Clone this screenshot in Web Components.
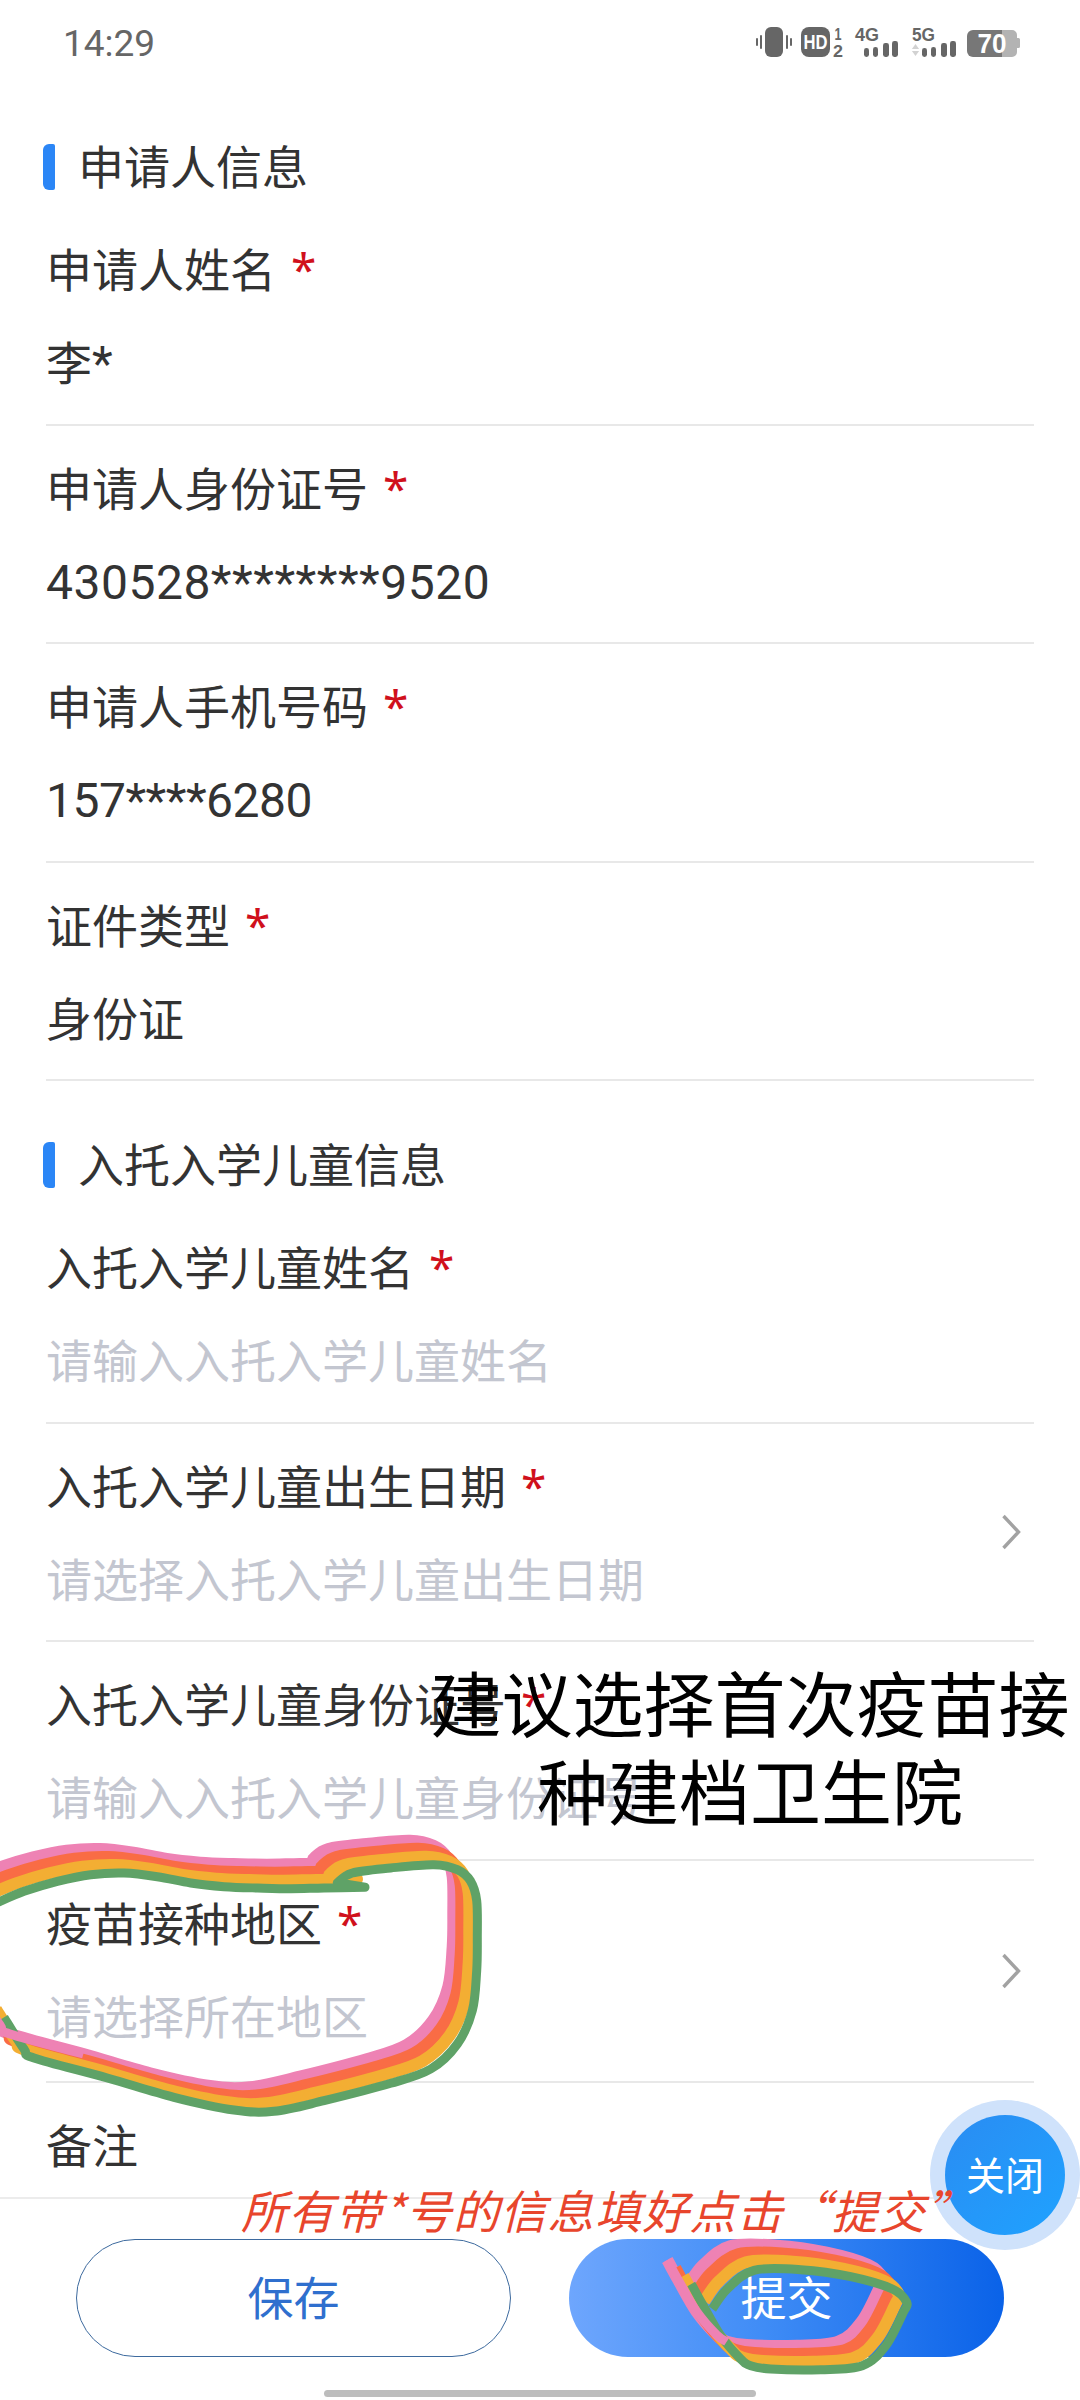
<!DOCTYPE html>
<html lang="zh-CN">
<head>
<meta charset="utf-8">
<title>入托入学预防接种查验</title>
<style>
  html, body { margin: 0; padding: 0; background: #fff; }
  body { font-family: "Noto Sans CJK SC", "Noto Sans", sans-serif; }
</style>
</head>
<body>

<phone-screen>
  <status-bar></status-bar>

  <form-section title="申请人信息">
    <form-row label="申请人姓名" value="李*" required></form-row>
    <form-row label="申请人身份证号" value="430528********9520" tracking=".5px" required></form-row>
    <form-row label="申请人手机号码" value="157****6280" tracking="-.5px" required></form-row>
    <form-row label="证件类型" value="身份证" required></form-row>
  </form-section>

  <form-section title="入托入学儿童信息">
    <form-row label="入托入学儿童姓名" placeholder="请输入入托入学儿童姓名" required></form-row>
    <form-row label="入托入学儿童出生日期" placeholder="请选择入托入学儿童出生日期" required arrow></form-row>
    <form-row label="入托入学儿童身份证号" placeholder="请输入入托入学儿童身份证号" required></form-row>
    <form-row label="疫苗接种地区" placeholder="请选择所在地区" required arrow tall></form-row>
    <form-row label="备注" last></form-row>
  </form-section>

  <action-bar slot="footer"></action-bar>

  <!-- things drawn over the form -->
  <close-fab slot="over"></close-fab>
  <rainbow-mark slot="over" origin="0,1780" top-from="250,822"
    points="-90,300 0,262 100,232 200,212 300,207 400,218 500,237 600,248 700,252 800,254 900,252 1023,250 | 940,236 | 985,207 1100,192 1230,182 1300,197 1340,232 1358,290 1360,400 1358,500 1345,620 1300,720 1220,795 1100,838 900,890 750,922 630,918 450,880 250,822 30,762 0,735 -60,640"></rainbow-mark>
  <rainbow-mark slot="over" origin="560,2080" top-from="500,785"
    points="385,615 430,555 510,499 650,497 800,518 925,555 968,595 958,625 905,725 835,785 710,797 560,795 500,785 470,765 410,695 355,600 322,540"></rainbow-mark>
  <note-text slot="over" kind="red">所有带*号的信息填好点击“提交”</note-text>
  <note-text slot="over" kind="black">建议选择首次疫苗接种建档卫生院</note-text>
</phone-screen>

<script>
// page frame, the form flows and the footer sits at the bottom
class PhoneScreen extends HTMLElement {
  constructor() {
    super();
    this.attachShadow({ mode: 'open' }).innerHTML = `
      <style>
        :host { display: flex; flex-direction: column; position: relative; width: 1080px; height: 2400px; overflow: hidden; background: #fff; }
        .form { flex: 1; min-height: 0; overflow: hidden; }
      </style>
      <div class="form"><slot></slot></div>
      <slot name="footer"></slot>
      <slot name="over"></slot>
    `;
  }
}

class StatusBar extends HTMLElement {
  constructor() {
    super();
    const bars = (dx) => [[864, 48, 5, 9], [873, 47, 5, 10], [883, 43, 6, 14], [892, 41, 6, 16]]
      .map(b => `<rect x="${b[0] + dx}" y="${b[1]}" width="${b[2]}" height="${b[3]}" rx="2.4" fill="#666"/>`).join('');
    this.attachShadow({ mode: 'open' }).innerHTML = `
      <style>
        :host { display: flex; justify-content: space-between; align-items: center; height: 83px; padding: 0 58px 0 63px; box-sizing: border-box; }
        .time { font: 400 37px Roboto, sans-serif; color: #666; margin-top: 4px; }
        svg { display: block; }
        text { font-family: "Liberation Sans", sans-serif; font-weight: 700; }
      </style>
      <span class="time">14:29</span>
      <svg width="268" height="44" viewBox="754 20 268 44">
        <rect x="765" y="27" width="18" height="30" rx="6" fill="#666"/>
        <rect x="756" y="38" width="2" height="8" rx="1" fill="#666"/>
        <rect x="760" y="35" width="2" height="14" rx="1" fill="#666"/>
        <rect x="786" y="35" width="2" height="14" rx="1" fill="#666"/>
        <rect x="790" y="38" width="2" height="8" rx="1" fill="#666"/>

        <rect x="801" y="27" width="29" height="30" rx="8" fill="#666"/>
        <text x="815.5" y="49" font-size="20" fill="#fff" text-anchor="middle" textLength="24" lengthAdjust="spacingAndGlyphs">HD</text>
        <text x="838" y="40" font-size="17" fill="#666" text-anchor="middle" textLength="7" lengthAdjust="spacingAndGlyphs">1</text>
        <text x="838" y="57" font-size="17" fill="#666" text-anchor="middle" textLength="10" lengthAdjust="spacingAndGlyphs">2</text>

        <text x="855" y="41" font-size="18" fill="#666" textLength="24" lengthAdjust="spacingAndGlyphs">4G</text>
        ${bars(0)}

        <text x="912" y="41" font-size="18" fill="#666" textLength="23" lengthAdjust="spacingAndGlyphs">5G</text>
        <path d="M915.5 44l3.6 5h-7.2z M915.5 56l3.6-5h-7.2z" fill="#d2d2d2"/>
        ${bars(58)}

        <path d="M1002 30h10a5 5 0 0 1 5 5v3h1.500a1.500 1.500 0 0 1 1.500 1.500v7a1.500 1.500 0 0 1-1.500 1.500h-1.500v4a5 5 0 0 1-5 5h-10z" fill="#b3b3b3"/>
        <path d="M1002 30h-29a6 6 0 0 0-6 6v15a6 6 0 0 0 6 6h29z" fill="#777"/>
        <text x="992" y="53" font-size="27" fill="#fff" text-anchor="middle" textLength="29" lengthAdjust="spacingAndGlyphs">70</text>
      </svg>
    `;
  }
}

class FormSection extends HTMLElement {
  constructor() {
    super();
    this.attachShadow({ mode: 'open' }).innerHTML = `
      <style>
        :host { display: block; padding: 0 46px; }
        .head { display: flex; align-items: center; height: 124px; box-sizing: border-box; margin-left: -3px; }
        .bar { width: 12px; height: 46px; background: #2b86f6; border-radius: 6px 2px 2px 6px; margin-right: 23px; margin-top: 44px; }
        .title { font-size: 46px; line-height: 64px; color: #333; margin-top: 38px; }
      </style>
      <div class="head"><i class="bar"></i><span class="title"></span></div>
      <slot></slot>
    `;
    this.shadowRoot.querySelector('.title').textContent = this.getAttribute('title');
  }
}

class FormRow extends HTMLElement {
  constructor() {
    super();
    this.attachShadow({ mode: 'open' }).innerHTML = `
      <style>
        :host { display: flex; align-items: center; height: 218.5px; box-sizing: border-box; border-bottom: 2px solid #e8e8e8; color: #333; }
        :host([tall]) { height: 222px; }
        :host([last]) { border-bottom: 0; align-items: flex-start; }
        .text { flex: 1; padding-top: 28px; align-self: flex-start; }
        .label, .value { font-size: 46px; line-height: 64px; white-space: nowrap; }
        .value { margin-top: 27px; }
        .value.empty { color: #c3c6d0; }
        .num { font: 400 48px/64px Roboto, sans-serif; }
        .star { color: #d0101c; margin-left: 15px; font-family: "Noto Sans", sans-serif; }
        svg { margin-right: 13px; flex: none; }
      </style>
      <div class="text">
        <div class="label"></div>
      </div>
    `;
    const text = this.shadowRoot.querySelector('.text');
    const label = text.querySelector('.label');
    label.textContent = this.getAttribute('label');
    if (this.hasAttribute('required')) {
      const star = document.createElement('span');
      star.className = 'star';
      star.textContent = '*';
      label.appendChild(star);
    }
    const value = this.getAttribute('value');
    const placeholder = this.getAttribute('placeholder');
    if (value || placeholder) {
      const line = document.createElement('div');
      line.className = value ? 'value' : 'value empty';
      if (value) {
        // digits and stars are a latin face, a bit larger than the chinese text
        value.split(/([0-9*]+)/).filter(Boolean).forEach(part => {
          const span = document.createElement('span');
          if (/^[0-9*]+$/.test(part)) span.className = 'num';
          span.textContent = part;
          line.appendChild(span);
        });
        if (this.hasAttribute('tracking')) line.style.letterSpacing = this.getAttribute('tracking');
      } else {
        line.textContent = placeholder;
      }
      text.appendChild(line);
    }
    if (this.hasAttribute('arrow')) {
      this.shadowRoot.querySelector('.text').insertAdjacentHTML('afterend',
        `<svg width="20" height="36" viewBox="0 0 20 36"><path d="M2.500 2L17.500 18L2.500 34" fill="none" stroke="#a2a2a2" stroke-width="3.400"/></svg>`);
    }
  }
}

class ActionBar extends HTMLElement {
  constructor() {
    super();
    this.attachShadow({ mode: 'open' }).innerHTML = `
      <style>
        :host { display: block; height: 203px; box-sizing: border-box; border-top: 2px solid #ececec; padding-top: 40px; position: relative; }
        .btns { display: flex; gap: 58px; padding-left: 76px; }
        button { width: 435px; height: 118px; border-radius: 59px; font: 400 46px "Noto Sans CJK SC", sans-serif; padding: 0 0 6px; box-sizing: border-box; }
        .save { background: #fff; border: 1.500px solid #3d6a9e; color: #2f6fce; }
        .submit { background: linear-gradient(to right, #6ea6fd, #3f8cf6 45%, #0a62e8); border: 0; color: #fff; }
        .home { position: absolute; left: 324px; bottom: 3px; width: 432px; height: 7px; border-radius: 4px; background: #bdbdbd; }
      </style>
      <div class="btns">
        <button class="save">保存</button>
        <button class="submit">提交</button>
      </div>
      <i class="home"></i>
    `;
  }
}

class CloseFab extends HTMLElement {
  constructor() {
    super();
    this.attachShadow({ mode: 'open' }).innerHTML = `
      <style>
        :host { position: absolute; left: 930px; top: 2100px; width: 150px; height: 150px; border-radius: 50%; background: #cfe2fb; display: flex; align-items: center; justify-content: center; }
        .in { width: 120px; height: 120px; border-radius: 50%; background: linear-gradient(135deg, #2a8cf2, #1fa2ff); color: #fff; font-size: 39px; padding-bottom: 4px; box-sizing: border-box; display: flex; align-items: center; justify-content: center; }
      </style>
      <div class="in">关闭</div>
    `;
  }
}

// the marker pen rings: one line drawn four times, shifted along the nib.
// points are in 3x crop units from origin, "|" keeps a sharp corner
class RainbowMark extends HTMLElement {
  constructor() {
    super();
    const [ox, oy] = this.getAttribute('origin').split(',').map(Number);
    const toPt = p => {
      const [x, y] = p.split(',').map(Number);
      return [ox + x / 3, oy + y / 3];
    };
    const spline = (pts) => {
      let d = '';
      for (let i = 0; i < pts.length - 1; i++) {
        const p0 = pts[i - 1] || pts[i], p1 = pts[i], p2 = pts[i + 1], p3 = pts[i + 2] || p2;
        const c1 = [p1[0] + (p2[0] - p0[0]) / 6, p1[1] + (p2[1] - p0[1]) / 6];
        const c2 = [p2[0] - (p3[0] - p1[0]) / 6, p2[1] - (p3[1] - p1[1]) / 6];
        d += `C${c1[0].toFixed(1)} ${c1[1].toFixed(1)} ${c2[0].toFixed(1)} ${c2[1].toFixed(1)} ${p2[0].toFixed(1)} ${p2[1].toFixed(1)}`;
      }
      return d;
    };
    let last = null, d = '';
    this.getAttribute('points').split('|').forEach(part => {
      const pts = part.trim().split(/\s+/).map(toPt);
      if (last) pts.unshift(last);
      else d = `M${pts[0][0]} ${pts[0][1]}`;
      d += spline(pts);
      last = pts[pts.length - 1];
    });
    const bands = [['#ee82b4', 12], ['#f96c45', 12], ['#f3ae33', 12], ['#5fa267', 9]];
    let paths = bands.map((b, i) =>
      `<path d="${d}" transform="translate(${i * 8} ${i * 8})" fill="none" stroke="${b[0]}" stroke-width="${b[1]}" stroke-linejoin="round"/>`).join('');
    // where the pen runs along its own nib the pink stays on top
    const from = this.getAttribute('top-from');
    if (from) {
      const tail = this.getAttribute('points').split('|').pop().trim().split(/\s+/);
      const pts = tail.slice(tail.indexOf(from)).map(toPt);
      paths += `<path d="M${pts[0][0]} ${pts[0][1]}${spline(pts)}" fill="none" stroke="#ee82b4" stroke-width="9"/>`;
    }
    this.attachShadow({ mode: 'open' }).innerHTML = `
      <style>
        :host { position: absolute; left: 0; top: 0; width: 1080px; height: 2400px; pointer-events: none; }
        svg { display: block; }
      </style>
      <svg width="1080" height="2400" viewBox="0 0 1080 2400">${paths}</svg>
    `;
  }
}

class NoteText extends HTMLElement {
  constructor() {
    super();
    this.attachShadow({ mode: 'open' }).innerHTML = `
      <style>
        :host { position: absolute; }
        :host([kind="red"]) { left: 241px; top: 2177px; font-size: 46px; line-height: 64px; letter-spacing: 1.3px; font-style: italic; color: #e8452c; white-space: nowrap; }
        :host([kind="black"]) { left: 429px; top: 1656px; width: 642px; font-size: 71px; line-height: 88px; text-align: center; color: #000; }
      </style>
      <slot></slot>
    `;
  }
}

customElements.define('phone-screen', PhoneScreen);
customElements.define('status-bar', StatusBar);
customElements.define('form-section', FormSection);
customElements.define('form-row', FormRow);
customElements.define('action-bar', ActionBar);
customElements.define('close-fab', CloseFab);
customElements.define('rainbow-mark', RainbowMark);
customElements.define('note-text', NoteText);
</script>
</body>
</html>
